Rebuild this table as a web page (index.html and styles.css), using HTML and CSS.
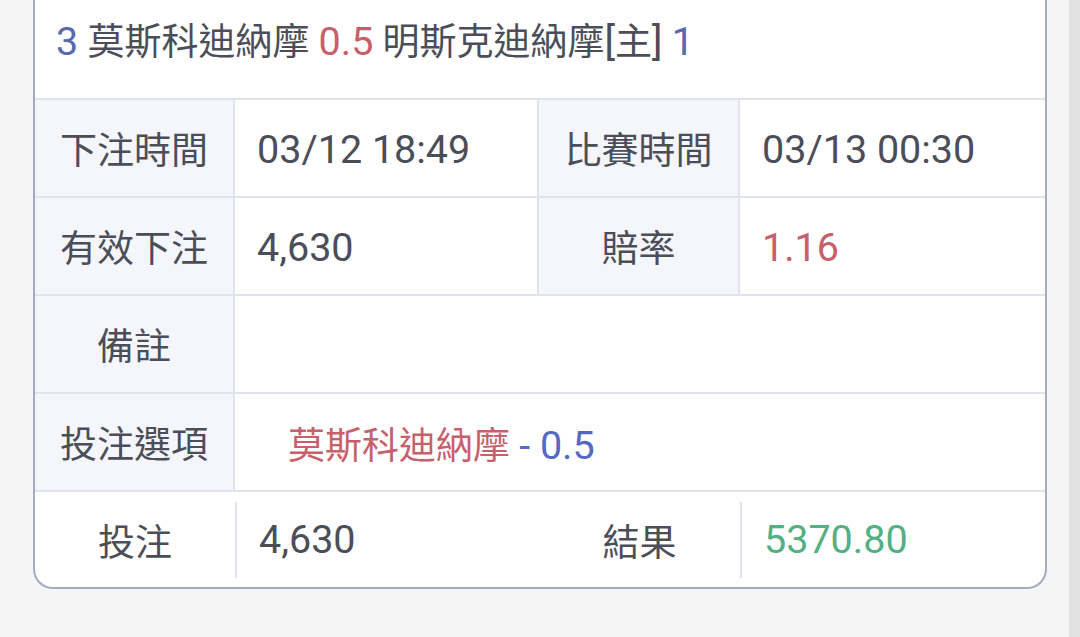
FILE: index.html
```html
<!DOCTYPE html>
<html lang="zh-Hant">
<head>
<meta charset="utf-8">
<link rel="stylesheet" href="styles.css">
</head>
<body>
<div class="page">
  <div class="content">
    <div class="card">
      <div class="title">
        <span><span class="blue num">3</span> 莫斯科迪納摩 <span class="red num">0.5</span> 明斯克迪納摩<span class="num">[</span>主<span class="num">]</span> <span class="blue num">1</span></span>
      </div>
      <div class="row four">
        <div class="cell label">下注時間</div>
        <div class="cell value num">03/12 18:49</div>
        <div class="cell label">比賽時間</div>
        <div class="cell value num">03/13 00:30</div>
      </div>
      <div class="row four">
        <div class="cell label">有效下注</div>
        <div class="cell value num">4,630</div>
        <div class="cell label">賠率</div>
        <div class="cell value red num">1.16</div>
      </div>
      <div class="row two">
        <div class="cell label">備註</div>
        <div class="cell value"></div>
      </div>
      <div class="row two">
        <div class="cell label">投注選項</div>
        <div class="cell value option"><span><span class="red">莫斯科迪納摩</span> <span class="blue2 num">- 0.5</span></span></div>
      </div>
      <div class="row last">
        <div class="cell plain">投注</div>
        <div class="cell pvalue num">4,630</div>
        <div class="cell plain">結果</div>
        <div class="cell pvalue green num">5370.80</div>
      </div>
    </div>
  </div>
  <div class="scroll"></div>
</div>
</body>
</html>
```

FILE: styles.css
```css
html, body {
  margin: 0;
  padding: 0;
}
body {
  background: #f5f5f5;
  font-family: "Roboto", "Noto Sans CJK TC", sans-serif;
  color: #4b4e58;
  font-size: 37px;
}
.num {
  font-size: 39.5px;
}
.page {
  display: flex;
  height: 637px;
  overflow: hidden;
}
.content {
  flex: 1;
  padding: 0 22px 0 33px;
}
.scroll {
  width: 11px;
  background: #e2e2e2;
}
.card {
  background: #fff;
  border: 2px solid #a6a9c4;
  border-top: none;
  border-radius: 0 0 20px 20px;
  overflow: hidden;
}
.title {
  height: 78px;
  padding-bottom: 20px;
  display: flex;
  align-items: center;
  padding-left: 21px;
  white-space: pre;
  border-bottom: 2px solid #e1e3ec;
}
.blue { color: #5a69ae; }
.blue2 { color: #5568c2; }
.red { color: #c8606b; }
.green { color: #52b083; }
.row {
  display: grid;
  height: 96px;
  border-bottom: 2px solid #e1e3ec;
}
.row.four {
  grid-template-columns: 200px 304px 201px 1fr;
}
.row.two {
  grid-template-columns: 200px 1fr;
}
.row.last {
  grid-template-columns: 200px 304px 201px 1fr;
  border-bottom: none;
  height: 95px;
  align-items: center;
}
.cell {
  display: flex;
  align-items: center;
}
.four .cell, .two .cell {
  border-right: 2px solid #e1e3ec;
}
.cell:last-child {
  border-right: none !important;
}
.label {
  background: #f5f6fb;
  justify-content: center;
}
.value {
  padding-left: 22px;
  padding-top: 2px;
}
.option {
  padding-left: 53px;
  white-space: pre;
}
.plain {
  justify-content: center;
  height: 100%;
}
.pvalue {
  padding-left: 22px;
  height: 76px;
  border-left: 2px solid #e1e3ec;
}
```
